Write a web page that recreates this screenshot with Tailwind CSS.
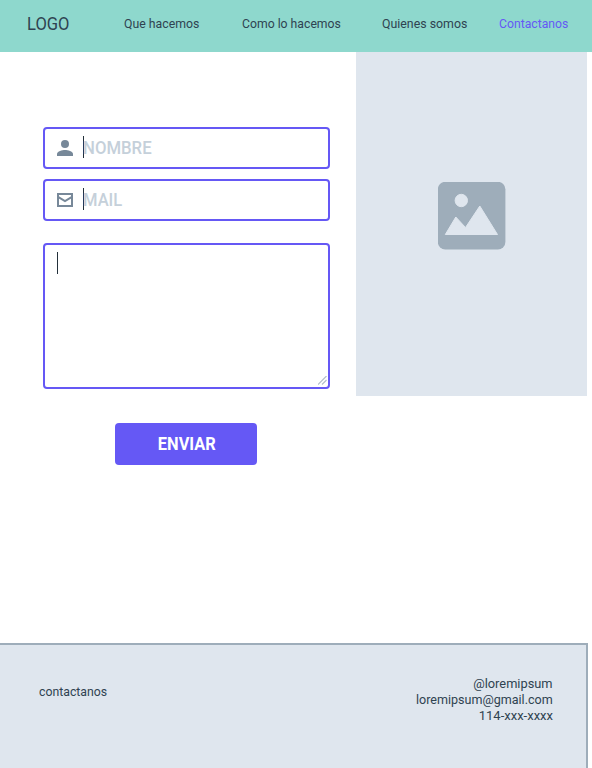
<!DOCTYPE html>
<html lang="es">
<head>
<meta charset="utf-8">
<title>Contactanos</title>
<script src="https://cdn.jsdelivr.net/npm/@tailwindcss/browser@4"></script>
</head>
<body class="flex h-[768px] w-[592px] flex-col overflow-hidden bg-white font-[Roboto,sans-serif] text-[13px] leading-4 text-[#2f4351]">
<header class="flex h-[52px] shrink-0 items-center bg-[#8ed8cd] pb-[5px] pl-[27px] whitespace-nowrap">
  <a class="w-[97px] origin-left scale-x-[0.92] text-[18px] leading-5">LOGO</a>
  <nav class="flex">
    <a class="w-[118px] origin-left scale-x-[0.945]">Que hacemos</a>
    <a class="w-[140px] origin-left scale-x-[0.94]">Como lo hacemos</a>
    <a class="w-[117px] origin-left scale-x-[0.95]">Quienes somos</a>
    <a class="origin-left scale-x-[0.94] text-[#6558f5]">Contactanos</a>
  </nav>
</header>
<main class="flex h-[591px] shrink-0 items-start justify-between pr-[5px] pl-[43px]">
  <form class="flex w-[287px] flex-col pt-[75px]">
    <div class="flex h-[42px] items-center rounded-[4px] border-2 border-[#6558f5] pl-3 text-[18px] leading-[22px] font-medium text-[#c5d0da]">
      <svg class="h-4 w-4" viewBox="0 0 16 16" fill="#778899"><circle cx="8" cy="4" r="4"/><path d="M0 16v-2c0-2.700 5.300-4 8-4s8 1.300 8 4v2z"/></svg>
      <span class="ml-[10px] h-[22px] w-px bg-[#23303a] -translate-y-px"></span><span class="-ml-px origin-left scale-x-[0.93]">NOMBRE</span>
    </div>
    <div class="mt-[10px] flex h-[42px] items-center rounded-[4px] border-2 border-[#6558f5] pl-3 text-[18px] leading-[22px] font-medium text-[#c5d0da]">
      <svg class="h-[14px] w-4" viewBox="0 0 16 14" fill="none" stroke="#778899" stroke-width="2"><path d="M1 1h14v12H1z"/><path d="M1 3.800L8 8l7-4.200"/></svg>
      <span class="ml-[10px] h-[22px] w-px bg-[#23303a] -translate-y-px"></span><span class="-ml-px origin-left scale-x-[0.92]">MAIL</span>
    </div>
    <div class="mt-[22px] flex h-[146px] justify-between rounded-[4px] border-2 border-[#6558f5] pt-[7px] pr-px pb-[2px] pl-3">
      <span class="h-[22px] w-px bg-[#23303a]"></span>
      <svg class="h-[9px] w-[9px] self-end" viewBox="0 0 9 9" fill="none" stroke="#b3bfca" stroke-width="1.200"><path d="M0 8.500L8.500 0M4 8.500L8.500 4"/></svg>
    </div>
    <button type="button" class="mt-[34px] ml-[72px] h-[42px] w-[142px] rounded-[4px] bg-[#6558f5] pl-[2px] text-[18px] font-bold text-white"><span class="inline-block scale-x-[0.91]">ENVIAR</span></button>
  </form>
  <div class="flex h-[344px] w-[231px] items-center justify-center bg-[#dfe6ee] pb-[17px]">
    <svg class="h-[68px] w-[68px]" viewBox="0 0 68 68"><g transform="translate(-.2 -.2)"><rect width="67.600" height="67.600" rx="7.500" fill="#9eadba"/><g fill="#dfe6ee" stroke="#dfe6ee" stroke-linejoin="round"><circle cx="23.500" cy="18.700" r="6.200"/><path d="M7.500 52.700L18 35.200 27.700 45.700 42 24.200 59.700 52.700z"/></g></g></svg>
  </div>
</main>
<footer class="flex w-[588px] grow justify-between border-t-2 border-r-2 border-[#9eadba] bg-[#dfe6ee] pr-[33px] pl-[39px]">
  <a class="origin-left scale-x-[0.945] pt-[39px]">contactanos</a>
  <address class="pt-[31px] text-right not-italic"><span class="inline-block origin-right scale-x-[0.985]">@loremipsum</span><br><span class="inline-block origin-right scale-x-[0.965]">loremipsum@gmail.com</span><br>114-xxx-xxxx</address>
</footer>
</body>
</html>
